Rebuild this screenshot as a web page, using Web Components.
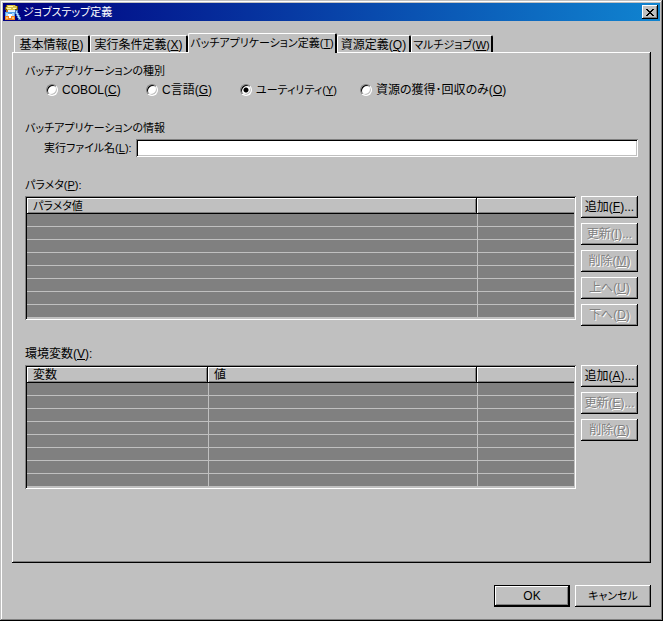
<!DOCTYPE html>
<html lang="ja">
<head>
<meta charset="utf-8">
<title>ジョブステップ定義</title>
<style>
    html {
        --face: #c0c0c0;
        --shadow: #808080;
        --kana-size: 11px;
        --raised: inset -1px -1px #000, inset 1px 1px #fff, inset -2px -2px #808080;
        --sunken: inset 1px 1px #808080, inset -1px -1px #fff, inset 2px 2px #000, inset -2px -2px #c0c0c0;
    }

    body {
        margin: 0;
        color: #000;
        font: 12px/16px "Liberation Sans", "Noto Sans CJK JP", sans-serif;
        font-feature-settings: "palt";
    }
</style>
</head>
<body>
<dialog-window caption="ジョブステップ定義">
    <tab-panel>
        <radio-group caption="バッチアプリケーションの種別"></radio-group>
        <file-field caption="バッチアプリケーションの情報"></file-field>
        <list-section caption="パラメタ" key="P" kana>
            <win-grid columns="パラメタ値:450,:0" rows="8" kana></win-grid>
            <win-button slot="actions" key="F" more>追加</win-button>
            <win-button slot="actions" key="I" more disabled>更新</win-button>
            <win-button slot="actions" key="M" disabled>削除</win-button>
            <win-button slot="actions" key="U" disabled>上へ</win-button>
            <win-button slot="actions" key="D" disabled>下へ</win-button>
        </list-section>
        <list-section caption="環境変数" key="V">
            <win-grid columns="変数:181,値:269,:0" rows="8"></win-grid>
            <win-button slot="actions" key="A" more>追加</win-button>
            <win-button slot="actions" key="E" more disabled>更新</win-button>
            <win-button slot="actions" key="R" disabled>削除</win-button>
        </list-section>
    </tab-panel>
    <win-button slot="footer" default>OK</win-button>
    <win-button slot="footer" kana>キャンセル</win-button>
</dialog-window>

<script>
// outer frame with the title bar and the row of buttons at the bottom
class DialogWindow extends HTMLElement {
    connectedCallback() {
        this.attachShadow({ mode: 'open' }).innerHTML = `
            <style>
                :host {
                    display: flex;
                    flex-direction: column;
                    box-sizing: border-box;
                    min-height: 100vh;
                    padding: 3px;
                    background: var(--face);
                    box-shadow: inset -1px -1px #000, inset 1px 1px var(--face),
                        inset -2px -2px var(--shadow), inset 2px 2px #fff;
                }
                header {
                    display: flex;
                    align-items: center;
                    height: 18px;
                    padding: 0 2px 0 1px;
                    color: #fff;
                    background: linear-gradient(to right, #000080, #1084d0);
                }
                h1 {
                    flex: 1;
                    margin: 0 0 0 2px;
                    font-size: var(--kana-size);
                    font-weight: normal;
                }
                header button {
                    display: flex;
                    align-items: center;
                    justify-content: center;
                    width: 16px;
                    height: 14px;
                    padding: 0;
                    border: 0;
                    background: var(--face);
                    box-shadow: var(--raised);
                }
                main {
                    display: flex;
                    flex: 1;
                    padding: 12px 9px 0;
                }
                footer {
                    display: flex;
                    justify-content: flex-end;
                    gap: 5px;
                    padding: 22px 9px 11px;
                }
                footer ::slotted(*) {
                    width: 76px;
                }
            </style>
            <header>
                <svg width="17" height="17" viewBox="0 0 17 17" shape-rendering="crispEdges" aria-hidden="true">
                    <path fill="#705800" d="M2 1h10v1h2v4h-2v1H2V6H1V3h1z"/>
                    <path fill="#d8c048" d="M3 1h8v1h2v3h-2v1H3V5H2V3h1z"/>
                    <path fill="#fff8b0" d="M4 2h5v1H4zM3 4h4v1H3zM9 4h3v1H9z"/>
                    <path fill="#c07020" d="M2 6h2v3H2zM11 6h2v2h-2z"/>
                    <path fill="#e0f0ff" d="M4 6h7v3H4z"/>
                    <path fill="#50a0e8" d="M1 8h10v5H1z"/>
                    <path fill="#a8d8ff" d="M2 9h2v3H2zM8 9h2v3H8z"/>
                    <path fill="#fff" d="M4 10h4v2H4z"/>
                    <path fill="#f08020" d="M1 12h10v4H1z"/>
                    <path fill="#ffc060" d="M2 13h2v2H2zM8 13h2v2H8z"/>
                    <path fill="#fff" d="M5 12h2v2H5z"/>
                    <path fill="#4878c0" d="M11 6h3v3h1v2h1v2h1v3h-3v-2h-1v-2h-1v-2h-1z"/>
                    <path fill="#b0d8ff" d="M12 7h1v2h1v2h1v2h1v2h-1v-1h-1v-2h-1v-2h-1z"/>
                </svg>
                <h1>${this.getAttribute('caption')}</h1>
                <button type="button" aria-label="閉じる">
                    <svg width="8" height="7" viewBox="0 0 8 7" shape-rendering="crispEdges">
                        <path d="M0 0h2v1h1v1h2V1h1V0h2v1H7v1H6v1H5v1h1v1h1v1h1v1H6V6H5V5H3v1H2v1H0V6h1V5h1V4h1V3H2V2H1V1H0z"/>
                    </svg>
                </button>
            </header>
            <main><slot></slot></main>
            <footer><slot name="footer"></slot></footer>
        `;
    }
}

// tab strip and the page under it
class TabPanel extends HTMLElement {
    connectedCallback() {
        const tabs = [
            ['基本情報', 'B', 76],
            ['実行条件定義', 'X', 98],
            ['バッチアプリケーション定義', 'T', 149],
            ['資源定義', 'Q', 74],
            ['マルチジョブ', 'W', 82],
        ];
        this.attachShadow({ mode: 'open' }).innerHTML = `
            <style>
                :host {
                    display: flex;
                    flex: 1;
                    flex-direction: column;
                    min-width: 0;
                }
                nav {
                    display: flex;
                    align-items: flex-end;
                    height: 19px;
                    padding-left: 2px;
                }
                button {
                    height: 17px;
                    padding: 1px 0 0;
                    border: solid;
                    border-width: 1px 2px 0 1px;
                    border-color: #fff #000 #fff #fff;
                    border-radius: 2px 2px 0 0;
                    color: inherit;
                    background: var(--face);
                    font: inherit;
                    font-feature-settings: "palt";
                    white-space: nowrap;
                }
                button.kana {
                    font-size: var(--kana-size);
                }
                button[aria-selected="true"] {
                    height: 20px;
                    margin-bottom: -1px;
                    padding-bottom: 2px;
                    z-index: 1;
                }
                section {
                    display: flex;
                    flex: 1;
                    flex-direction: column;
                    padding: 11px 13px 20px 13px;
                    box-shadow: inset -1px -1px #000, inset 1px 1px #fff, inset -2px -2px var(--shadow);
                }
            </style>
            <nav role="tablist">
                ${tabs.map(([text, key, width]) => `
                    <button type="button" role="tab" style="width: ${width}px"
                        class="${/[ァ-ヶ]/.test(text) ? 'kana' : ''}"
                        aria-selected="${key === 'T'}">${text}(<u>${key}</u>)</button>`).join('')}
            </nav>
            <section role="tabpanel"><slot></slot></section>
        `;
    }
}

// kind of the batch application
class RadioGroup extends HTMLElement {
    connectedCallback() {
        const items = [
            ['COBOL', 'C'],
            ['C言語', 'G'],
            ['ユーティリティ', 'Y'],
            ['資源の獲得･回収のみ', 'O'],
        ];
        this.attachShadow({ mode: 'open' }).innerHTML = `
            <style>
                :host {
                    display: block;
                }
                fieldset {
                    margin: 0;
                    padding: 0;
                    border: 0;
                }
                legend {
                    padding: 0;
                    font-size: var(--kana-size);
                }
                div {
                    display: grid;
                    grid-template-columns: 100px 94px 120px auto;
                    padding: 3px 0 0 21px;
                }
                label {
                    display: flex;
                    align-items: center;
                    gap: 4px;
                    white-space: nowrap;
                }
                .kana {
                    font-size: var(--kana-size);
                }
                input {
                    appearance: none;
                    box-sizing: border-box;
                    width: 12px;
                    height: 12px;
                    margin: 0;
                    border: 1px solid;
                    border-color: #808080 #fff #fff #808080;
                    border-radius: 50%;
                    background: #fff;
                    box-shadow: inset 1px 1px #000, inset -1px -1px var(--face);
                }
                input:checked {
                    background: radial-gradient(circle, #000 2px, #fff 3px);
                }
            </style>
            <fieldset>
                <legend>${this.getAttribute('caption')}</legend>
                <div>
                    ${items.map(([text, key]) => `
                        <label class="${/[ァ-ヶ]/.test(text) ? 'kana' : ''}">
                            <input type="radio" name="kind" ${key === 'Y' ? 'checked' : ''}>
                            <span>${text}(<u>${key}</u>)</span>
                        </label>`).join('')}
                </div>
            </fieldset>
        `;
    }
}

class FileField extends HTMLElement {
    connectedCallback() {
        this.attachShadow({ mode: 'open' }).innerHTML = `
            <style>
                :host {
                    display: block;
                    margin-top: 22px;
                    font-size: var(--kana-size);
                }
                div {
                    display: flex;
                    align-items: center;
                    margin-top: 3px;
                    padding-left: 19px;
                }
                label {
                    width: 92px;
                    white-space: nowrap;
                }
                input {
                    flex: 1;
                    box-sizing: border-box;
                    min-width: 0;
                    height: 18px;
                    padding: 2px 4px;
                    border: 0;
                    background: #fff;
                    box-shadow: var(--sunken);
                    font: inherit;
                }
                input:focus {
                    outline: none;
                }
            </style>
            ${this.getAttribute('caption')}
            <div>
                <label for="file">実行ファイル名(<u>L</u>):</label>
                <input id="file" type="text">
            </div>
        `;
    }
}

// caption, grid and a column of buttons
class ListSection extends HTMLElement {
    connectedCallback() {
        this.attachShadow({ mode: 'open' }).innerHTML = `
            <style>
                :host {
                    display: block;
                    margin-top: 20px;
                }
                :host([kana]) header {
                    font-size: var(--kana-size);
                }
                .row {
                    display: flex;
                    align-items: flex-start;
                    gap: 5px;
                    margin-top: 3px;
                }
                .row ::slotted(win-grid) {
                    flex: 1;
                    min-width: 0;
                }
                .actions {
                    display: flex;
                    flex-direction: column;
                    gap: 5px;
                    width: 57px;
                }
            </style>
            <header>${this.getAttribute('caption')}(<u>${this.getAttribute('key')}</u>):</header>
            <div class="row">
                <slot></slot>
                <div class="actions"><slot name="actions"></slot></div>
            </div>
        `;
    }
}

// empty table, columns are given as "title:width" and 0 takes the rest
class WinGrid extends HTMLElement {
    connectedCallback() {
        const columns = this.getAttribute('columns').split(',').map((c) => c.split(':'));
        const rows = parseInt(this.getAttribute('rows'), 10);
        const row = `<tr>${'<td></td>'.repeat(columns.length)}</tr>`;

        this.attachShadow({ mode: 'open' }).innerHTML = `
            <style>
                :host {
                    display: block;
                    padding: 2px;
                    box-shadow: var(--sunken);
                }
                table {
                    width: 100%;
                    border-spacing: 0;
                    table-layout: fixed;
                    background: var(--shadow);
                }
                th {
                    height: 16px;
                    padding: 0 6px;
                    background: var(--face);
                    box-shadow: var(--raised);
                    font-weight: normal;
                    line-height: 16px;
                    text-align: left;
                }
                :host([kana]) th {
                    font-size: var(--kana-size);
                }
                th:last-child {
                    box-shadow: inset 0 -1px #000, inset 1px 1px #fff, inset 0 -2px var(--shadow);
                }
                td {
                    height: 12px;
                    padding: 0;
                    border-bottom: 1px solid var(--face);
                }
                td + td {
                    border-left: 1px solid var(--face);
                }
            </style>
            <table>
                <colgroup>
                    ${columns.map(([, w]) => `<col${w === '0' ? '' : ` style="width: ${w}px"`}>`).join('')}
                </colgroup>
                <thead><tr>${columns.map(([title]) => `<th scope="col">${title}</th>`).join('')}</tr></thead>
                <tbody>${row.repeat(rows)}</tbody>
            </table>
        `;
    }
}

class WinButton extends HTMLElement {
    connectedCallback() {
        const key = this.getAttribute('key');
        const more = this.hasAttribute('more') ? '...' : '';
        const disabled = this.hasAttribute('disabled') ? 'disabled' : '';

        this.attachShadow({ mode: 'open' }).innerHTML = `
            <style>
                :host {
                    display: block;
                }
                :host([kana]) {
                    font-size: var(--kana-size);
                }
                button {
                    display: block;
                    box-sizing: border-box;
                    width: 100%;
                    height: 22px;
                    padding: 0;
                    border: 0;
                    color: #000;
                    background: var(--face);
                    box-shadow: var(--raised);
                    font: inherit;
                    font-feature-settings: "palt";
                    white-space: nowrap;
                }
                :host([default]) button {
                    border: 1px solid #000;
                }
                button:disabled {
                    color: var(--shadow);
                    text-shadow: 1px 1px #fff;
                }
            </style>
            <button type="button" ${disabled}><slot></slot>${key ? `(<u>${key}</u>)` : ''}${more}</button>
        `;
    }
}

customElements.define('dialog-window', DialogWindow);
customElements.define('tab-panel', TabPanel);
customElements.define('radio-group', RadioGroup);
customElements.define('file-field', FileField);
customElements.define('list-section', ListSection);
customElements.define('win-grid', WinGrid);
customElements.define('win-button', WinButton);
</script>
</body>
</html>
